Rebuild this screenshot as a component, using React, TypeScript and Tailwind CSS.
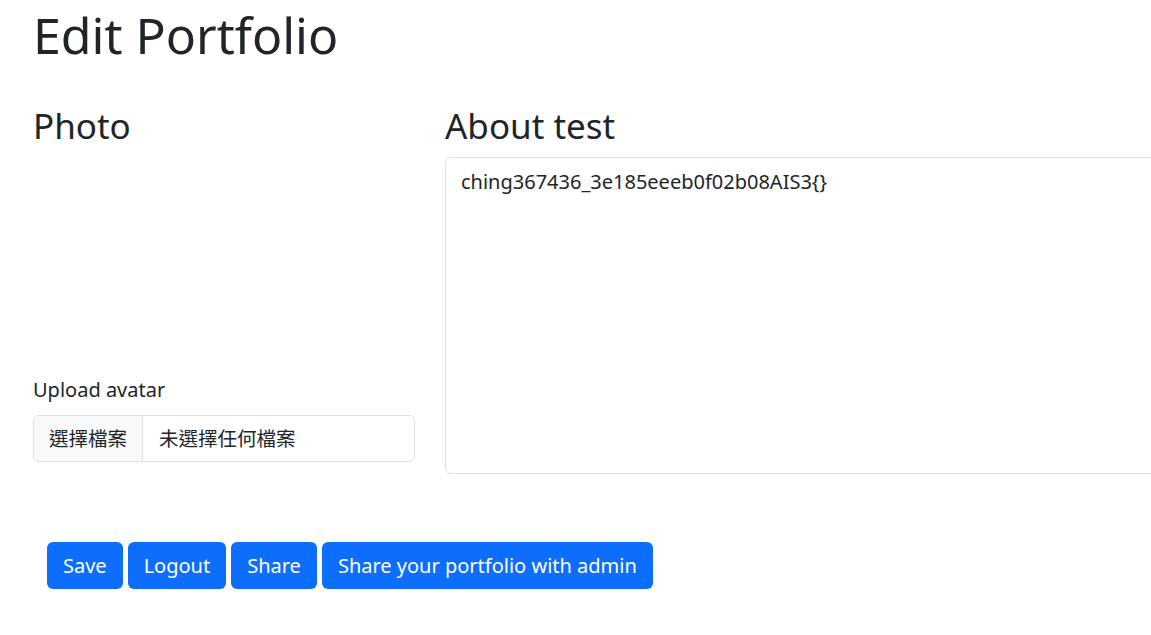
export default function App() {
  const font = { fontFamily: '"Noto Sans", "Noto Sans CJK TC", sans-serif' };
  return (
    <div className="min-h-[635px] w-[1151px] overflow-hidden bg-white text-[#212529]" style={font}>
      <div className="pl-[33px]">
        <h1 className="text-[50px] leading-[70px] font-normal">Edit Portfolio</h1>

        <div className="mt-[32px] flex gap-[30px]">
          {/* photo column */}
          <div className="w-[382px] shrink-0 flex flex-col">
            <h2 className="text-[35px] leading-[48px] font-normal">Photo</h2>
            <div className="h-[226px]" />
            <label className="text-[20px] leading-[28px]">Upload avatar</label>
            <div className="mt-[11px] flex h-[47px] rounded-[6px] border border-[#dee2e6] overflow-hidden text-[19.5px]">
              <div className="flex items-center bg-[#f8f9fa] border-r border-[#dee2e6] px-[15px]">選擇檔案</div>
              <div className="flex items-center px-[16px]">未選擇任何檔案</div>
            </div>
          </div>

          {/* about column */}
          <div className="flex flex-col">
            <h2 className="text-[35px] leading-[48px] font-normal">About test</h2>
            <textarea
              className="mt-[7px] h-[317px] w-[760px] resize-none rounded-[6px] border border-[#dee2e6] px-[15px] py-[10px] text-[20px] leading-[28px] text-[#212529] outline-none"
              defaultValue="ching367436_3e185eeeb0f02b08AIS3{}"
              style={font}
            />
          </div>
        </div>

        <div className="mt-[68px] ml-[14px] flex gap-[5px]">
          {["Save", "Logout", "Share", "Share your portfolio with admin"].map((b) => (
            <button key={b} className="h-[47px] rounded-[6px] bg-[#0d6efd] px-[16px] text-[20px] text-white">
              {b}
            </button>
          ))}
        </div>
      </div>
    </div>
  );
}
